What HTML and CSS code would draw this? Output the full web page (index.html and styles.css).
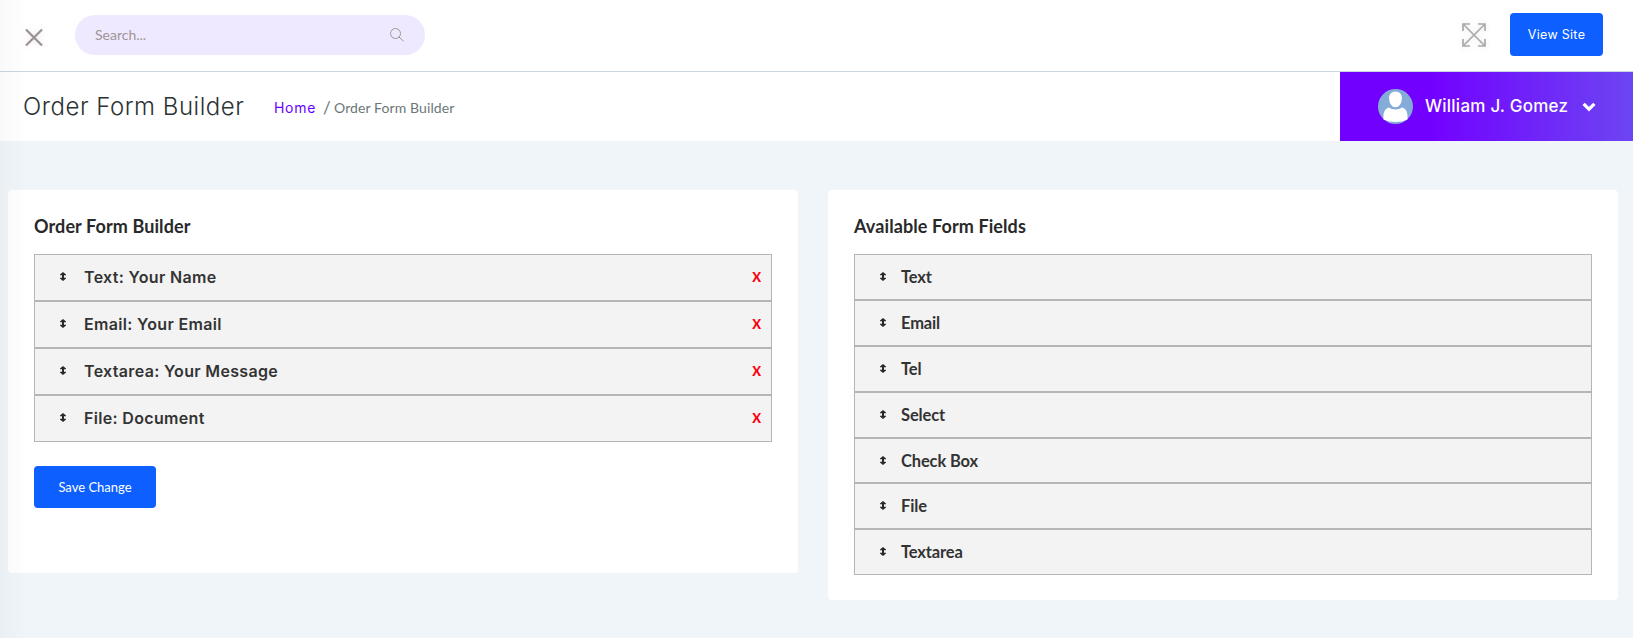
FILE: index.html
```
<!DOCTYPE html>
<html lang="en">
<head>
<meta charset="utf-8">
<title>Order Form Builder</title>
<link rel="stylesheet" href="styles.css">
</head>
<body>
<svg class="sprite" aria-hidden="true">
  <symbol id="move" viewBox="0 0 6 9"><path d="M3 0 6 2.600V3.300H4V5.700H6V6.400L3 9 0 6.400V5.700H2V3.300H0V2.600Z"/></symbol>
</svg>
<header class="topbar">
  <svg class="close" viewBox="0 0 24 24"><path d="M4 4.5 20 20.5M20 4.5 4 20.5"/></svg>
  <div class="search">
    <span class="search-text">Search...</span>
    <svg class="search-icon" viewBox="0 0 14 14"><circle cx="5.5" cy="5.5" r="5"/><path d="m9 9 4.6 4.4"/></svg>
  </div>
  <svg class="expand" viewBox="0 0 24 24"><path d="M1.5 1.5 22.500 22.500M22.500 1.500 1.500 22.500M1 8V1H8M16 1H23V8M23 16V23H16M8 23H1V16"/></svg>
  <a class="button view-site"><span>View Site</span></a>
</header>
<div class="titlebar">
  <h1 class="page-title">Order Form Builder</h1>
  <nav class="breadcrumb"><a class="home">Home</a><span class="slash">/</span><span class="current">Order Form Builder</span></nav>
  <div class="user">
    <svg class="avatar" viewBox="0 0 35 35"><circle cx="17.500" cy="17.500" r="17.500" fill="#85abd8"/><path d="M5.500 30.500C5 24 6.500 19.500 11 18.500C14 21 21 21 24 18.500C28.500 19.500 30 24 29.500 30.500Q24 33 17.500 33T5.500 30.500Z" fill="#fff"/><path d="M17.500 2.500C21.500 2.500 24.200 5.500 23.900 9.500C23.700 14.500 21 18.300 17.500 18.300S11.300 14.500 11.100 9.500C10.800 5.500 13.500 2.500 17.500 2.500Z" fill="#fff"/></svg>
    <span class="user-name">William J. Gomez</span>
    <svg class="chevron" viewBox="0 0 13 9"><path d="m1.500 1.500 5 5 5-5"/></svg>
  </div>
</div>
<main class="content">
  <section class="card builder">
    <h2 class="card-title">Order Form Builder</h2>
    <ul class="fields">
      <li class="field"><svg class="move"><use href="#move"/></svg><span class="label">Text: Your Name</span><span class="remove">X</span></li>
      <li class="field"><svg class="move"><use href="#move"/></svg><span class="label">Email: Your Email</span><span class="remove">X</span></li>
      <li class="field"><svg class="move"><use href="#move"/></svg><span class="label">Textarea: Your Message</span><span class="remove">X</span></li>
      <li class="field"><svg class="move"><use href="#move"/></svg><span class="label">File: Document</span><span class="remove">X</span></li>
    </ul>
    <a class="button save">Save Change</a>
  </section>
  <section class="card available">
    <h2 class="card-title">Available Form Fields</h2>
    <ul class="fields">
      <li class="field"><svg class="move"><use href="#move"/></svg><span class="label">Text</span></li>
      <li class="field"><svg class="move"><use href="#move"/></svg><span class="label">Email</span></li>
      <li class="field"><svg class="move"><use href="#move"/></svg><span class="label">Tel</span></li>
      <li class="field"><svg class="move"><use href="#move"/></svg><span class="label">Select</span></li>
      <li class="field"><svg class="move"><use href="#move"/></svg><span class="label">Check Box</span></li>
      <li class="field"><svg class="move"><use href="#move"/></svg><span class="label">File</span></li>
      <li class="field"><svg class="move"><use href="#move"/></svg><span class="label">Textarea</span></li>
    </ul>
  </section>
</main>
<div class="edge-shade"></div>
</body>
</html>
```
FILE: styles.css
```
* { box-sizing: border-box; }
body { margin: 0; height: 638px; overflow: hidden; background: #f0f5fa; color: #313131; font-family: Lato, sans-serif; font-size: 14px; }
h1, h2, ul { margin: 0; padding: 0; }
ul { list-style: none; }
svg { display: block; flex: none; }
.sprite { display: none; }
.topbar { display: flex; align-items: flex-start; height: 72px; padding-right: 30px; background: #fff; border-bottom: 1px solid #c8d6df; }
.close { width: 24px; height: 24px; margin: 25px 29px 0 22px; fill: none; stroke: #9c9090; stroke-width: 2.2; filter: drop-shadow(0 0 3px #e9e5e5); }
.search { display: flex; align-items: center; justify-content: space-between; width: 350px; height: 40px; margin-top: 15px; padding: 0 21px 0 20px; border-radius: 20px; background: #efe9ff; }
.search-text { margin-bottom: 2px; color: #9f9595; }
.search-icon { width: 14px; height: 14px; fill: none; stroke: #9f9595; stroke-width: 1; }
.expand { width: 24px; height: 24px; margin: 23px 24px 0 auto; fill: none; stroke: #aaa; stroke-width: 1.7; filter: drop-shadow(0 0 3px #e6e6e6); }
.button { display: flex; align-items: center; justify-content: center; border-radius: 4px; background: #0d60ff; color: #fff; }
.view-site { width: 93px; height: 43px; margin-top: 13px; font: 400 12.500px Inter, sans-serif; letter-spacing: .3px; }
.titlebar { display: flex; height: 69px; background: #fff; }
.page-title { width: 250px; padding-left: 23px; font: 300 24px/70px Inter, sans-serif; letter-spacing: .52px; color: #2b3232; white-space: nowrap; }
.breadcrumb { display: flex; padding-left: 24px; line-height: 72px; color: #6b7777; white-space: nowrap; }
.home { width: 49px; color: #6a00ff; font-family: Inter, sans-serif; font-size: 14px; letter-spacing: .7px; }
.slash { width: 11px; font-size: 17px; line-height: 71px; }
.current { letter-spacing: .1px; }
.user { display: flex; align-items: center; width: 293px; margin-left: auto; padding-left: 38px; background: linear-gradient(90deg, #7200ff 30%, #6d45f3); color: #fff; }
.avatar { width: 35px; height: 35px; }
.user-name { width: 142px; margin: 0 0 1px 12px; font: 500 17px/24px Inter, sans-serif; letter-spacing: .24px; white-space: nowrap; }
.chevron { width: 14px; height: 10px; margin-left: 15px; fill: none; stroke: #fff; stroke-width: 3; }
.content { display: grid; grid-template-columns: 790px 790px; gap: 30px; align-items: start; padding: 49px 0 0 8px; }
.card { padding: 26px; border-radius: 4px; background: #fff; }
.builder { height: 383px; }
.available { height: 410px; }
.card-title { height: 38px; font-size: 18px; line-height: 21px; font-weight: 700; letter-spacing: .1px; color: #292929; }
.field { display: flex; align-items: center; height: 47px; padding: 0 10px 0 25px; border: 1px solid #b5b5b5; background: #f3f3f3; }
.available .field { height: 45.900px; }
.move { width: 6px; height: 9px; margin: 0 18px 2px 0; fill: #292929; }
.available .move { margin: 0 15px 1px 0; }
.label { font-size: 16.500px; font-weight: 700; color: #333; line-height: 20px; letter-spacing: -.15px; white-space: nowrap; }
.builder .label { margin-bottom: 2px; font-family: Inter, sans-serif; font-size: 16px; font-weight: 600; letter-spacing: .33px; }
.remove { margin: 0 0 2px auto; color: #fb0011; font-size: 13px; font-weight: 900; }
.save { width: 122px; height: 42px; margin-top: 24px; padding-bottom: 1px; font-size: 13px; }
.edge-shade { position: absolute; left: 0; top: 0; width: 24px; height: 638px; background: linear-gradient(90deg, rgba(0,0,0,.025), rgba(0,0,0,.004)); pointer-events: none; }
```
